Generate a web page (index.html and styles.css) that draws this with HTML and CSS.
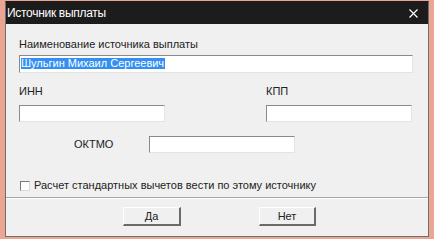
FILE: index.html
```html
<!DOCTYPE html>
<html lang="ru">
<head>
<meta charset="utf-8">
<title>Источник выплаты</title>
<link rel="stylesheet" href="styles.css">
</head>
<body>
<div class="frame">
  <div class="window">
    <div class="titlebar">
      <span class="title">Источник выплаты</span>
      <svg class="close" width="9" height="9" viewBox="0 0 9 9"><path d="M0.5 0.5 L8.5 8.5 M8.5 0.5 L0.5 8.5" stroke="#fff" stroke-width="1.2" fill="none"/></svg>
    </div>
    <div class="content">
      <div class="label first">Наименование источника выплаты</div>
      <div class="field name"><span class="sel">Шульгин Михаил Сергеевич</span></div>
      <div class="pair">
        <div class="col">
          <div class="label">ИНН</div>
          <div class="field small"></div>
        </div>
        <div class="col">
          <div class="label">КПП</div>
          <div class="field small"></div>
        </div>
      </div>
      <div class="oktmo">
        <span class="label">ОКТМО</span>
        <div class="field small"></div>
      </div>
      <label class="check">
        <span class="box"></span>
        <span class="label">Расчет стандартных вычетов вести по этому источнику</span>
      </label>
    </div>
    <div class="footer">
      <button class="btn yes">Да</button>
      <button class="btn no">Нет</button>
    </div>
  </div>
</div>
</body>
</html>
```

FILE: styles.css
```css
html, body {
  margin: 0;
  padding: 0;
}
body {
  width: 434px;
  height: 239px;
  background: #eaa593;
  font-family: "Liberation Sans", Arial, sans-serif;
  font-size: 11px;
  color: #222;
  overflow: hidden;
}
.frame {
  padding: 1px 5px 2px 5px;
}
.window {
  width: 422px;
  height: 234px;
  border: 1px solid #6e6e6e;
  border-top-color: #1c1c1c;
  background: #f0f0f0;
  display: flex;
  flex-direction: column;
}
.titlebar {
  height: 22px;
  background: #1c1c1c;
  display: flex;
  align-items: center;
  justify-content: space-between;
  padding: 0 10px 0 1px;
  flex: none;
}
.title {
  color: #fff;
  font-size: 12px;
  letter-spacing: -0.3px;
}
.close {
  display: block;
  margin-top: 1px;
}
.content {
  padding: 14px 14px 0 13px;
  flex: 1;
}
.label {
  line-height: 13px;
  white-space: nowrap;
}
.field {
  background: #fff;
  border-top: 1px solid #8a8a8a;
  border-left: 1px solid #8a8a8a;
  border-bottom: 1px solid #e3e3e3;
  border-right: 1px solid #e3e3e3;
  box-sizing: border-box;
}
.field.name {
  margin-top: 4px;
  height: 18px;
  width: 394px;
  padding: 2px 0 0 1px;
  line-height: 11px;
}
.sel {
  display: inline-block;
  background: #3390f0;
  color: #fff;
  line-height: 11px;
  padding: 0 1px 0 0;
}
.field.small {
  height: 17px;
  width: 146px;
}
.pair {
  display: grid;
  grid-template-columns: 247px 146px;
  margin-top: 12px;
}
.pair .field {
  margin-top: 7px;
}
.oktmo {
  display: flex;
  align-items: center;
  margin-top: 14px;
  padding-left: 55px;
}
.oktmo .label {
  width: 75px;
}
.check {
  display: flex;
  align-items: center;
  margin-top: 26px;
  padding-left: 1px;
}
.box {
  width: 8px;
  height: 8px;
  background: #fff;
  border-top: 1px solid #7a7a7a;
  border-left: 1px solid #7a7a7a;
  border-bottom: 1px solid #d8d8d8;
  border-right: 1px solid #d8d8d8;
  margin-right: 4px;
}
.footer {
  border-top: 1px solid #a6a6a6;
  box-shadow: inset 0 1px 0 #ffffff;
  height: 39px;
  display: flex;
  align-items: flex-start;
  padding: 9px 0 0 117px;
  flex: none;
  box-sizing: border-box;
}
.btn {
  font-family: "Liberation Sans", Arial, sans-serif;
  font-size: 11px;
  color: #222;
  background: #f0f0f0;
  height: 19px;
  border-top: 1px solid #ffffff;
  border-left: 1px solid #ffffff;
  border-bottom: 2px solid #6a6a6a;
  border-right: 2px solid #6a6a6a;
  padding: 0;
  margin: 0;
}
.btn.yes {
  width: 58px;
}
.btn.no {
  width: 57px;
  margin-left: 78px;
}
```
